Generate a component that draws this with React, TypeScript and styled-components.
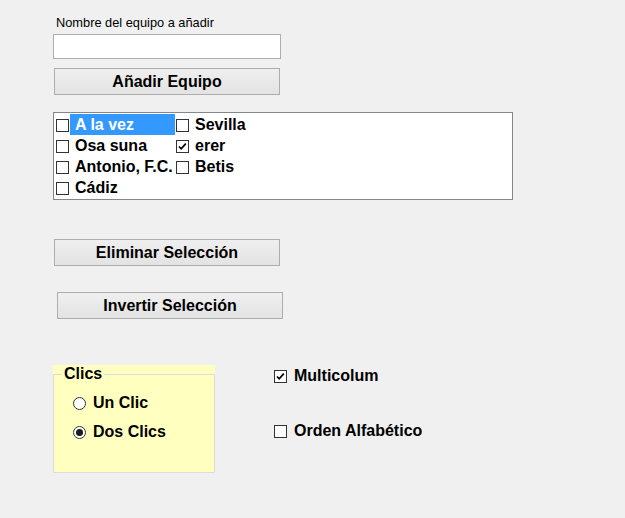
import React from "react";
import styled, { createGlobalStyle } from "styled-components";

const Global = createGlobalStyle`
  html, body { margin: 0; padding: 0; background: #f0f0f0; }
  body { font-family: "Liberation Sans", Arial, sans-serif; color: #000; }
`;

const Page = styled.div`
  width: 625px;
  height: 518px;
  box-sizing: border-box;
  padding: 15px 0 0 53px;
  display: flex;
  flex-direction: column;
  align-items: flex-start;
`;

const FieldLabel = styled.div`
  font-size: 12.8px;
  line-height: 16px;
  margin-left: 3px;
`;

const TextBox = styled.div`
  margin-top: 3px;
  width: 228px;
  height: 25px;
  box-sizing: border-box;
  background: #fff;
  border: 1px solid #abadb3;
`;

const Button = styled.div<{ $top: number; $left: number }>`
  margin-top: ${(p) => p.$top}px;
  margin-left: ${(p) => p.$left}px;
  width: 226px;
  height: 27px;
  box-sizing: border-box;
  border: 1px solid #adadad;
  background: linear-gradient(#efefef, #e3e3e3);
  display: flex;
  align-items: center;
  justify-content: center;
  font-weight: bold;
  font-size: 16px;
`;

const ListBox = styled.div`
  margin-top: 17px;
  width: 460px;
  height: 88px;
  box-sizing: border-box;
  background: #fff;
  border: 1px solid #828790;
  padding: 1px 0 0 2px;
  display: grid;
  grid-template-rows: repeat(4, 21px);
  grid-auto-flow: column;
  grid-auto-columns: 120px;
`;

const ListItem = styled.div`
  display: flex;
  align-items: center;
  height: 21px;
`;

const ItemText = styled.div<{ $selected?: boolean }>`
  margin-left: 1px;
  width: 105px;
  height: 21px;
  box-sizing: border-box;
  padding-left: 5px;
  display: flex;
  align-items: center;
  font-weight: bold;
  font-size: 16px;
  background: ${(p) => (p.$selected ? "#3399ff" : "transparent")};
  color: ${(p) => (p.$selected ? "#fff" : "#000")};
  white-space: nowrap;
`;

const Box = styled.div`
  width: 13px;
  height: 13px;
  box-sizing: border-box;
  border: 1px solid #333;
  background: #fff;
  flex: none;
  display: flex;
  align-items: center;
  justify-content: center;
  margin-top: 2px;
`;

const Check = () => (
  <svg width="11" height="11" viewBox="0 0 11 11">
    <path d="M2 5.5 L4.2 7.8 L8.8 2.6" fill="none" stroke="#000" strokeWidth="1.7" />
  </svg>
);

const CheckBox = ({ checked }: { checked?: boolean }) => <Box>{checked && <Check />}</Box>;

const BottomRow = styled.div`
  margin-top: 46px;
  display: flex;
  align-items: flex-start;
`;

const GroupWrap = styled.div`
  width: 162px;
  height: 108px;
  background: #ffffc0;
  display: flex;
`;

const Fieldset = styled.fieldset`
  margin: 0;
  padding: 0;
  flex: 1;
  border: 1px solid #dcdcdc;
  min-width: 0;
`;

const Legend = styled.legend`
  margin-left: 8px;
  padding: 0 2px 0 2px;
  font-weight: bold;
  font-size: 16px;
  line-height: 18px;
  background: #ffffc0;
`;

const RadioList = styled.div`
  padding: 10px 0 0 19px;
  display: flex;
  flex-direction: column;
  gap: 9px;
`;

const OptionRow = styled.div`
  display: flex;
  align-items: center;
  height: 20px;
  font-weight: bold;
  font-size: 16px;
  gap: 7px;
`;

const Circle = styled.div<{ $checked?: boolean }>`
  width: 13px;
  height: 13px;
  box-sizing: border-box;
  border-radius: 50%;
  border: 1px solid #333;
  background: #fff;
  display: flex;
  align-items: center;
  justify-content: center;
  &::after {
    content: "";
    width: 7px;
    height: 7px;
    border-radius: 50%;
    background: ${(p) => (p.$checked ? "#1a1a1a" : "transparent")};
  }
`;

const Options = styled.div`
  margin-left: 59px;
  margin-top: 1px;
  display: flex;
  flex-direction: column;
  gap: 35px;
`;

const OptBox = styled(Box)`
  margin-top: 0;
`;

const items = ["A la vez", "Osa suna", "Antonio, F.C.", "Cádiz", "Sevilla", "erer", "Betis"];

export default function App() {
  return (
    <>
      <Global />
      <Page>
        <FieldLabel>Nombre del equipo a añadir</FieldLabel>
        <TextBox />
        <Button $top={9} $left={1}>Añadir Equipo</Button>
        <ListBox>
          {items.map((t, i) => (
            <ListItem key={t}>
              <CheckBox checked={t === "erer"} />
              <ItemText $selected={i === 0}>{t}</ItemText>
            </ListItem>
          ))}
        </ListBox>
        <Button $top={39} $left={1}>Eliminar Selección</Button>
        <Button $top={26} $left={4}>Invertir Selección</Button>
        <BottomRow>
          <GroupWrap>
            <Fieldset>
              <Legend>Clics</Legend>
              <RadioList>
                <OptionRow>
                  <Circle />
                  Un Clic
                </OptionRow>
                <OptionRow>
                  <Circle $checked />
                  Dos Clics
                </OptionRow>
              </RadioList>
            </Fieldset>
          </GroupWrap>
          <Options>
            <OptionRow>
              <OptBox>
                <Check />
              </OptBox>
              Multicolum
            </OptionRow>
            <OptionRow>
              <OptBox />
              Orden Alfabético
            </OptionRow>
          </Options>
        </BottomRow>
      </Page>
    </>
  );
}
